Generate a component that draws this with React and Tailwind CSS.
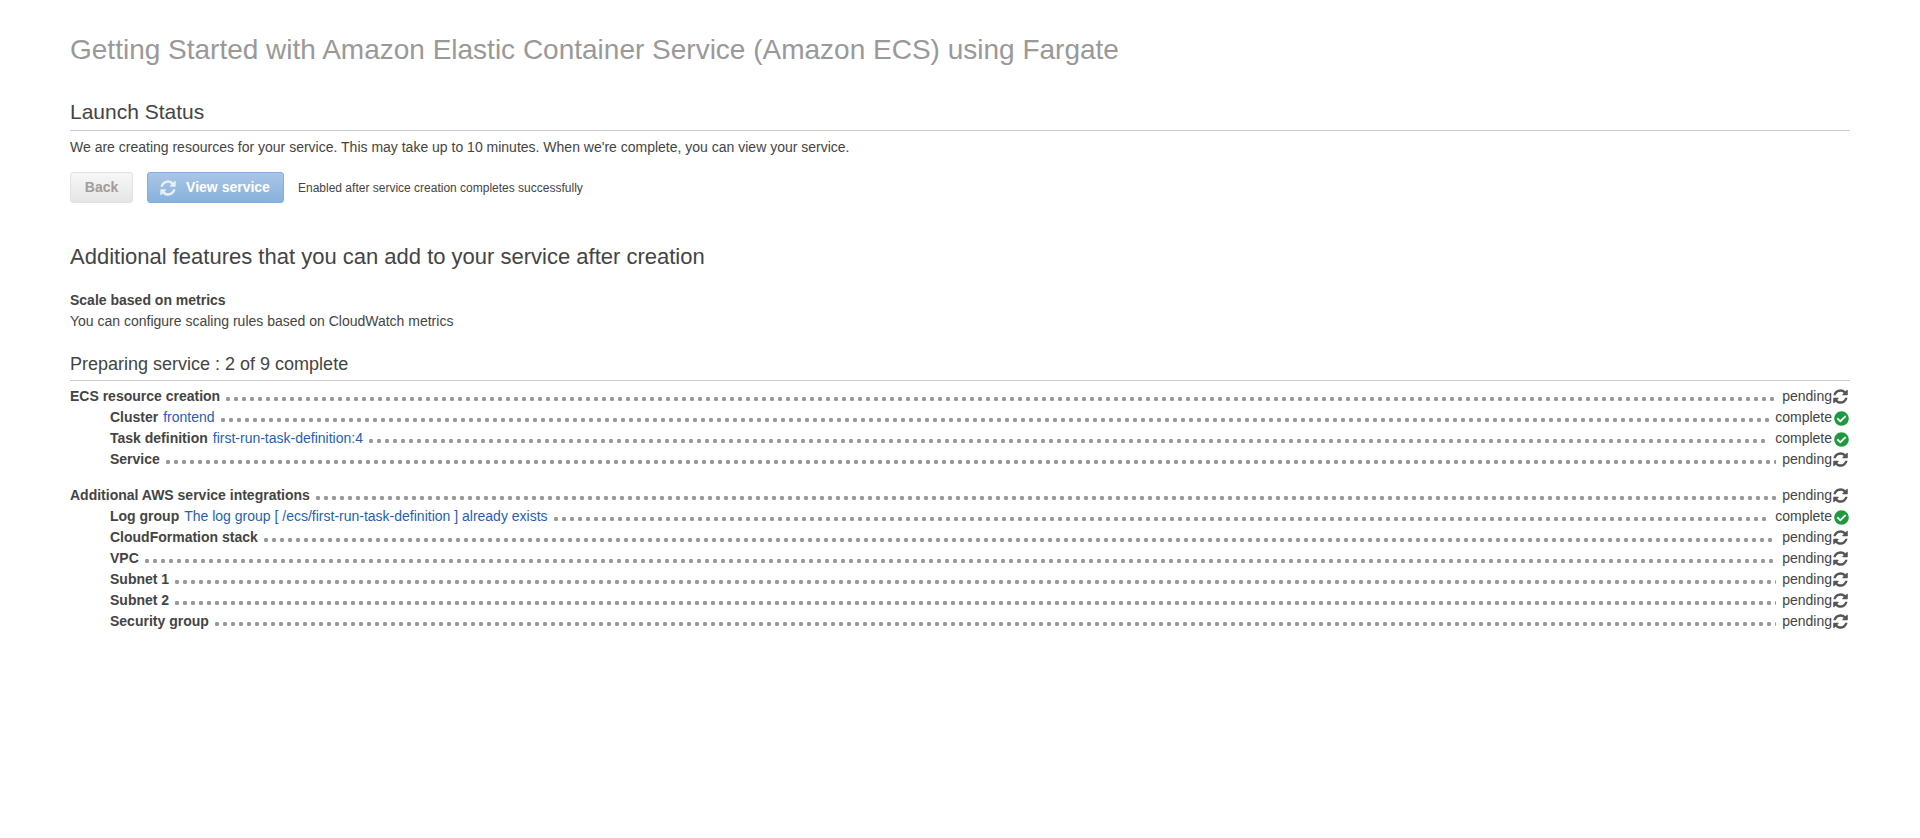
import React from "react";
import { FaCheckCircle } from "react-icons/fa";

const groups = [
  {
    rows: [
      { label: "ECS resource creation", status: "pending" },
      { label: "Cluster", link: "frontend", status: "complete", sub: true },
      { label: "Task definition", link: "first-run-task-definition:4", status: "complete", sub: true },
      { label: "Service", status: "pending", sub: true },
    ],
  },
  {
    rows: [
      { label: "Additional AWS service integrations", status: "pending" },
      { label: "Log group", link: "The log group [ /ecs/first-run-task-definition ] already exists", status: "complete", sub: true },
      { label: "CloudFormation stack", status: "pending", sub: true },
      { label: "VPC", status: "pending", sub: true },
      { label: "Subnet 1", status: "pending", sub: true },
      { label: "Subnet 2", status: "pending", sub: true },
      { label: "Security group", status: "pending", sub: true },
    ],
  },
];

// font-awesome 4 refresh glyph, the fa5 one in react-icons has thinner arcs
const RefreshIcon = ({ className }) => (
  <svg viewBox="0 0 1792 1792" fill="currentColor" className={className}>
    <path d="M1639 1056q0 5-1 7-64 268-268 434.5t-478 166.5q-146 0-282.5-55t-243.5-157l-129 129q-19 19-45 19t-45-19-19-45v-448q0-26 19-45t45-19h448q26 0 45 19t19 45-19 45l-137 137q71 66 161 102t187 36q134 0 250-65t186-179q11-17 53-117 8-23 30-23h192q13 0 22.5 9.5t9.5 22.5zm25-800v448q0 26-19 45t-45 19h-448q-26 0-45-19t-19-45 19-45l138-138q-148-137-349-137-134 0-250 65t-186 179q-11 17-53 117-8 23-30 23h-199q-13 0-22.5-9.5t-9.5-22.5v-7q65-268 270-434.5t480-166.5q146 0 284 55.5t245 156.5l130-129q19-19 45-19t45 19 19 45z" />
  </svg>
);

const Row = ({ row }) => (
  <div className={`flex items-center h-[21px] text-[14px] text-[#444] ${row.sub ? "pl-[40px]" : ""}`}>
    <span className="font-bold whitespace-nowrap">{row.label}</span>
    {row.link && <a className="ml-[5px] text-[#1f5fb4] whitespace-nowrap">{row.link}</a>}
    <div className="flex-1 h-[8px] ml-[4px] mr-[6px] mt-[5px] bg-[radial-gradient(circle,#999_1.9px,transparent_2.5px)] bg-[length:8px_8px] bg-repeat-x" />
    <span>{row.status}</span>
    {row.status === "complete" ? (
      <FaCheckCircle className="w-[15px] h-[15px] text-[#1d9a3f] ml-[2px] mr-px mt-px" />
    ) : (
      <RefreshIcon className="w-[17px] h-[17px] text-[#555] mr-px" />
    )}
  </div>
);

export default function App() {
  return (
    <div className="min-h-screen bg-white px-[70px] font-['Liberation_Sans',Arial,sans-serif] text-[#444]">
      <h1 className="pt-[33px] text-[28px] leading-[34px] text-[#999]">
        Getting Started with Amazon Elastic Container Service (Amazon ECS) using Fargate
      </h1>

      <h2 className="mt-[32px] pb-[6px] text-[21px] leading-[25px] border-b border-[#ccc]">Launch Status</h2>
      <p className="mt-[6px] text-[14px] leading-[20px]">
        We are creating resources for your service. This may take up to 10 minutes. When we're complete, you can view your service.
      </p>

      <div className="mt-[15px] flex items-center">
        <button className="h-[31px] w-[63px] rounded-[3px] border border-[#e2e2e2] bg-gradient-to-b from-[#f7f7f7] to-[#e5e5e5] text-[14px] font-bold text-[#a09c98]">
          Back
        </button>
        <button className="ml-[14px] flex h-[31px] w-[137px] items-center justify-center rounded-[3px] border border-[#85aedb] bg-gradient-to-b from-[#a9c6e6] to-[#88b1dc] pr-[2px] text-[14px] font-bold text-white">
          <RefreshIcon className="mr-[9px] h-[18px] w-[18px] text-[#e6eff8]" />
          View service
        </button>
        <span className="ml-[14px] text-[12px] text-[#444]">Enabled after service creation completes successfully</span>
      </div>

      <h2 className="mt-[41px] text-[22px] leading-[26px]">Additional features that you can add to your service after creation</h2>

      <div className="mt-[20px] text-[14px] leading-[21px]">
        <p className="font-bold">Scale based on metrics</p>
        <p>You can configure scaling rules based on CloudWatch metrics</p>
      </div>

      <h3 className="mt-[21px] pb-[5px] text-[18px] leading-[22px] border-b border-[#ccc]">Preparing service : 2 of 9 complete</h3>

      <div className="mt-[5px] flex flex-col gap-[15px]">
        {groups.map((g, i) => (
          <div key={i}>
            {g.rows.map((row) => (
              <Row key={row.label} row={row} />
            ))}
          </div>
        ))}
      </div>
    </div>
  );
}
